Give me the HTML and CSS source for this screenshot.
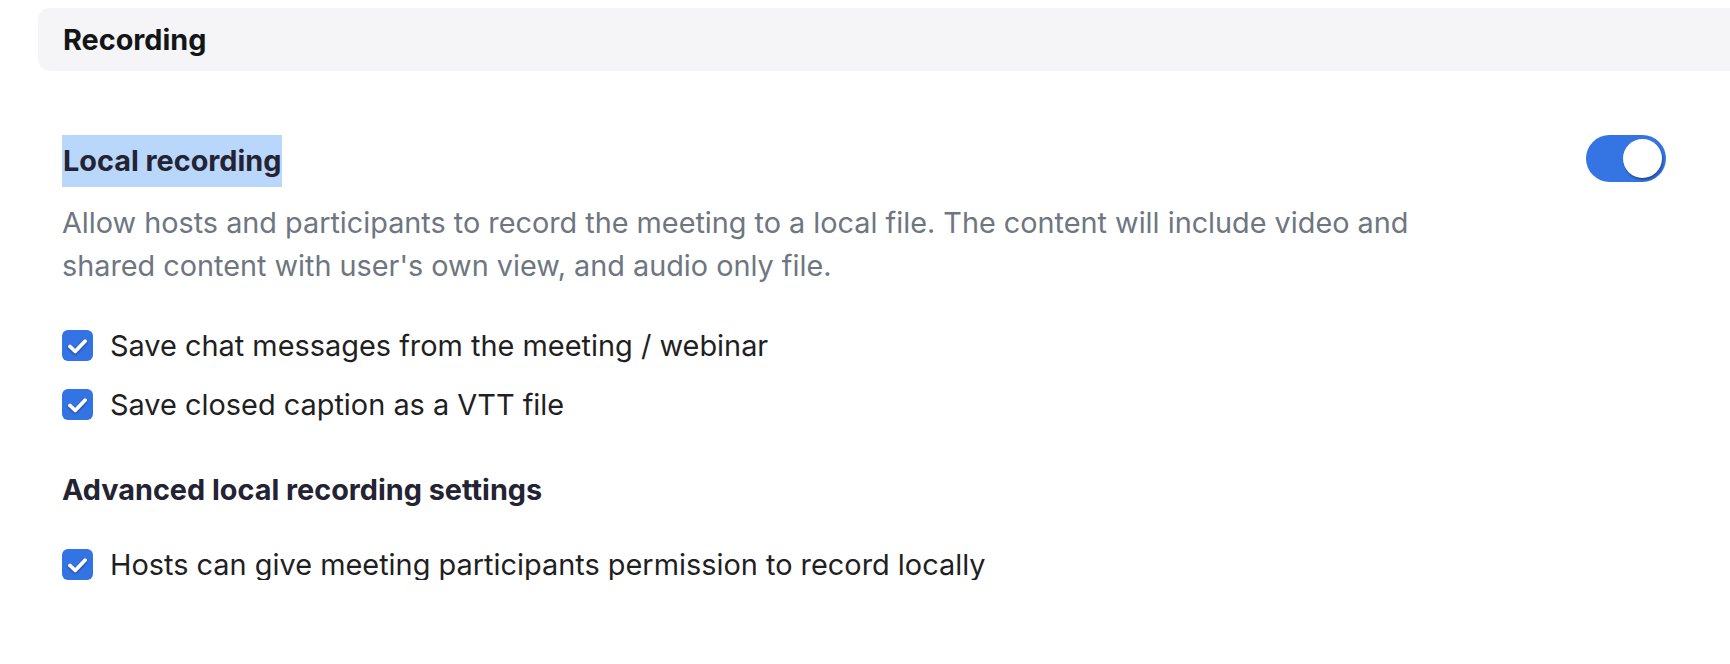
FILE: index.html
```html
<!DOCTYPE html>
<html lang="en">
<head>
<meta charset="utf-8">
<title>Recording settings</title>
<link rel="stylesheet" href="styles.css">
</head>
<body>
  <div class="section-header">Recording</div>
  <div class="setting">
    <div class="setting-head">
      <span class="setting-title">Local recording</span>
      <span class="toggle on"><span class="knob"></span></span>
    </div>
    <p class="desc">Allow hosts and participants to record the meeting to a local file. The content will include video and shared content with user's own view, and audio only file.</p>
    <ul class="checks">
      <li class="check-row">
        <span class="checkbox"><svg viewBox="0 0 31 31" width="31" height="31"><path d="M8 16.5 L13.2 21.5 L23 11.2" fill="none" stroke="#fff" stroke-width="3.8" stroke-linecap="round" stroke-linejoin="round"/></svg></span>
        <span class="check-label">Save chat messages from the meeting / webinar</span>
      </li>
      <li class="check-row">
        <span class="checkbox"><svg viewBox="0 0 31 31" width="31" height="31"><path d="M8 16.5 L13.2 21.5 L23 11.2" fill="none" stroke="#fff" stroke-width="3.8" stroke-linecap="round" stroke-linejoin="round"/></svg></span>
        <span class="check-label">Save closed caption as a VTT file</span>
      </li>
    </ul>
    <h3 class="sub-title">Advanced local recording settings</h3>
    <ul class="checks">
      <li class="check-row">
        <span class="checkbox"><svg viewBox="0 0 31 31" width="31" height="31"><path d="M8 16.5 L13.2 21.5 L23 11.2" fill="none" stroke="#fff" stroke-width="3.8" stroke-linecap="round" stroke-linejoin="round"/></svg></span>
        <span class="check-label">Hosts can give meeting participants permission to record locally</span>
      </li>
    </ul>
  </div>
</body>
</html>
```

FILE: styles.css
```css
html, body {
  margin: 0;
  padding: 0;
  background: #ffffff;
}
body {
  font-family: Inter, "Noto Sans", "Liberation Sans", sans-serif;
  color: #232333;
}
.section-header {
  margin: 8px 0 0 38px;
  height: 63px;
  box-sizing: border-box;
  padding-left: 25px;
  display: flex;
  align-items: center;
  background: #f5f5f7;
  border-radius: 12px 0 0 12px;
  font-size: 28.8px;
  font-weight: 700;
  color: #131619;
}
.setting {
  padding: 64px 64px 0 62px;
}
.setting-head {
  display: flex;
  justify-content: space-between;
  align-items: center;
  height: 52px;
}
.setting-title {
  display: inline-block;
  background: #b9d7fb;
  line-height: 52px;
  font-size: 28.8px;
  font-weight: 700;
  color: #232333;
  padding: 0 1px;
}
.toggle {
  position: relative;
  display: inline-block;
  width: 80px;
  height: 47px;
  border-radius: 24px;
  background: #3574e3;
  margin-top: -5px;
}
.toggle .knob {
  position: absolute;
  right: 4px;
  top: 4px;
  width: 39px;
  height: 39px;
  border-radius: 50%;
  background: #fff;
  box-shadow: 1px 2px 2px rgba(0, 0, 0, 0.35);
}
.desc {
  margin: 14px 0 0 0;
  max-width: 1390px;
  font-size: 28.8px;
  line-height: 43px;
  color: #6e7681;
}
.checks {
  list-style: none;
  margin: 0;
  padding: 0;
  display: flex;
  flex-direction: column;
  gap: 27px;
}
.desc + .checks {
  margin-top: 42px;
}
.check-row {
  display: flex;
  align-items: center;
  gap: 17px;
  height: 32px;
}
.checkbox {
  width: 31px;
  height: 31px;
  border-radius: 6px;
  background: #3373e3;
  display: flex;
  flex-shrink: 0;
}
.checkbox svg {
  display: block;
  filter: drop-shadow(0 1.5px 1px rgba(0, 0, 40, 0.45));
}
.check-label {
  font-size: 28.9px;
  color: #1f1f24;
}
.sub-title {
  margin: 53px 0 41px 0;
  font-size: 28.8px;
  font-weight: 700;
  line-height: 34px;
  color: #232333;
}
```
